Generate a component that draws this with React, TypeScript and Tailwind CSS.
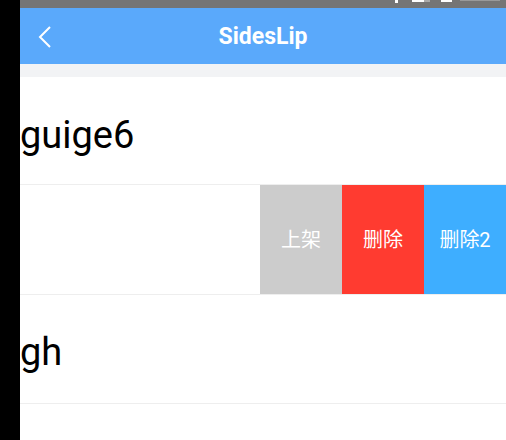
import React from "react";

export default function App() {
  return (
    <div className="w-[506px] h-[440px] flex bg-white overflow-hidden" style={{ fontFamily: "Roboto, 'Noto Sans CJK SC', sans-serif" }}>
      <div className="w-[20px] h-full bg-black shrink-0" />
      <div className="flex-1 flex flex-col">
        <div className="h-[8px] bg-[#757575] relative">
          <div className="absolute left-[375px] top-0 w-[3px] h-[3px] bg-white" />
          <div className="absolute left-[392px] top-0 w-[12px] h-[2px] bg-white" />
          <div className="absolute left-[404px] top-0 w-[6px] h-[2px] bg-[#aaa]" />
          <div className="absolute left-[421px] top-0 w-[11px] h-[2px] bg-white" />
          <div className="absolute left-[440px] top-0 w-[40px] h-[1px] bg-[#999]" />
        </div>
        <div className="h-[56px] bg-[#5aa9fb] relative flex items-center justify-center">
          <svg className="absolute left-[17px] top-[17px]" width="16" height="24" viewBox="0 0 16 24">
            <path d="M13 2 L3 12 L13 22" fill="none" stroke="white" strokeWidth="2" />
          </svg>
          <span className="text-white font-bold text-[23px] leading-none">SidesLip</span>
        </div>
        <div className="h-[13px] bg-[#f2f3f5]" />
        <div className="h-[108px] flex items-center border-b border-[#eeeeee]">
          <span className="text-[38px] text-black leading-none pt-[8px]">guige6</span>
        </div>
        <div className="h-[110px] flex border-b border-[#eeeeee]">
          <div className="flex-1" />
          <div className="w-[82px] bg-[#cccccc] flex items-center justify-center text-white text-[20px]">上架</div>
          <div className="w-[82px] bg-[#ff3b30] flex items-center justify-center text-white text-[20px]">删除</div>
          <div className="w-[82px] bg-[#3eaeff] flex items-center justify-center text-white text-[20px]">删除2</div>
        </div>
        <div className="h-[109px] flex items-center border-b border-[#eeeeee]">
          <span className="text-[38px] text-black leading-none pt-[6px]">gh</span>
        </div>
        <div className="flex-1" />
      </div>
    </div>
  );
}
